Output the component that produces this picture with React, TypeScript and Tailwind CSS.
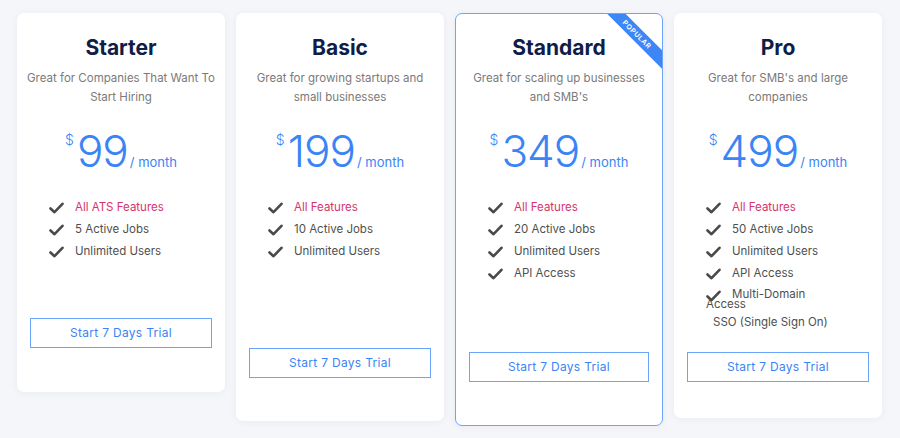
import React from "react";

const Check = () => (
  <svg width="15" height="12" viewBox="0 0 15 12" className="shrink-0">
    <path d="M1.5 6.5 L5.5 10.2 L13.5 1.8" fill="none" stroke="#4a4a4a" strokeWidth="2.6" strokeLinecap="round" strokeLinejoin="round" />
  </svg>
);

type Plan = {
  name: string;
  desc: string[];
  price: string;
  features: string[];
  btnMt: string;
  pb: string;
  popular?: boolean;
  pro?: boolean;
};

const plans: Plan[] = [
  { name: "Starter", desc: ["Great for Companies That Want To", "Start Hiring"], price: "99", features: ["All ATS Features", "5 Active Jobs", "Unlimited Users"], btnMt: "mt-[55px]", pb: "pb-[44px]" },
  { name: "Basic", desc: ["Great for growing startups and", "small businesses"], price: "199", features: ["All Features", "10 Active Jobs", "Unlimited Users"], btnMt: "mt-[85px]", pb: "pb-[43px]" },
  { name: "Standard", desc: ["Great for scaling up businesses", "and SMB's"], price: "349", features: ["All Features", "20 Active Jobs", "Unlimited Users", "API Access"], btnMt: "mt-[67px]", pb: "pb-[43px]", popular: true },
  { name: "Pro", desc: ["Great for SMB's and large", "companies"], price: "499", features: ["All Features", "50 Active Jobs", "Unlimited Users", "API Access"], btnMt: "mt-[21px]", pb: "pb-[36px]", pro: true },
];

function Card({ p }: { p: Plan }) {
  return (
    <div
      className={`relative w-[208px] bg-white rounded-[7px] shadow-[0_1px_8px_rgba(20,30,60,0.05)] flex flex-col overflow-hidden ${p.pb} ${
        p.popular ? "border-[1.5px] border-[#6aa4fb] pt-[20px]" : "pt-[21px]"
      }`}
    >
      {p.popular && (
        <div className="absolute left-[131px] top-[14px] w-[100px] h-[13px] bg-[#3d86f5] rotate-45 flex items-center justify-center">
          <span className="text-white text-[7px] font-semibold tracking-[0.6px] leading-none">POPULAR</span>
        </div>
      )}
      <h2 className="text-center text-[21px] leading-[28px] font-bold text-[#0f1d48]">{p.name}</h2>
      <div className="mt-[7px] text-center text-[11.5px] leading-[19px] text-[#7a7a7a] px-2">
        {p.desc.map((d) => (
          <div key={d}>{d}</div>
        ))}
      </div>
      <div className="mt-[24px] flex justify-center items-baseline text-[#3b84f6]">
        <span className="text-[14px] self-start mt-[-2px] mr-[3px] font-light">$</span>
        <span className="text-[44px] leading-[40px] font-light tracking-[-1px]">{p.price}</span>
        <span className="text-[13px] ml-[2px]">/ month</span>
      </div>
      <ul className="mt-[24px] pl-[32px] text-[11.5px] text-[#4f4f4f]">
        {p.features.map((f, i) => (
          <li key={f} className="h-[22px] flex items-center">
            <Check />
            <span className={`ml-[11px] ${i === 0 ? "text-[#d6336c]" : ""}`}>{f}</span>
          </li>
        ))}
        {p.pro && (
          <>
            <li className="relative mt-[4px] leading-[10px] indent-[26px]">
              <span className="absolute left-0 top-[1px]"><Check /></span>
              Multi-Domain
              <br />
              Access
            </li>
            <li className="mt-[4px] leading-[18px] pl-[7px]">SSO (Single Sign On)</li>
          </>
        )}
      </ul>
      <button
        className={`${p.btnMt} mx-[13px] h-[30px] border-[1.5px] border-[#6aa4fb] text-[#3b84f6] text-[12px] tracking-[0.3px] bg-white`}
      >
        Start 7 Days Trial
      </button>
    </div>
  );
}

export default function App() {
  return (
    <div
      className="w-[900px] h-[438px] bg-[#f5f6fa] flex items-start gap-[11px] pl-[17px] pt-[13px] overflow-hidden"
      style={{ fontFamily: "Inter, 'Open Sans', sans-serif" }}
    >
      {plans.map((p) => (
        <Card key={p.name} p={p} />
      ))}
    </div>
  );
}
